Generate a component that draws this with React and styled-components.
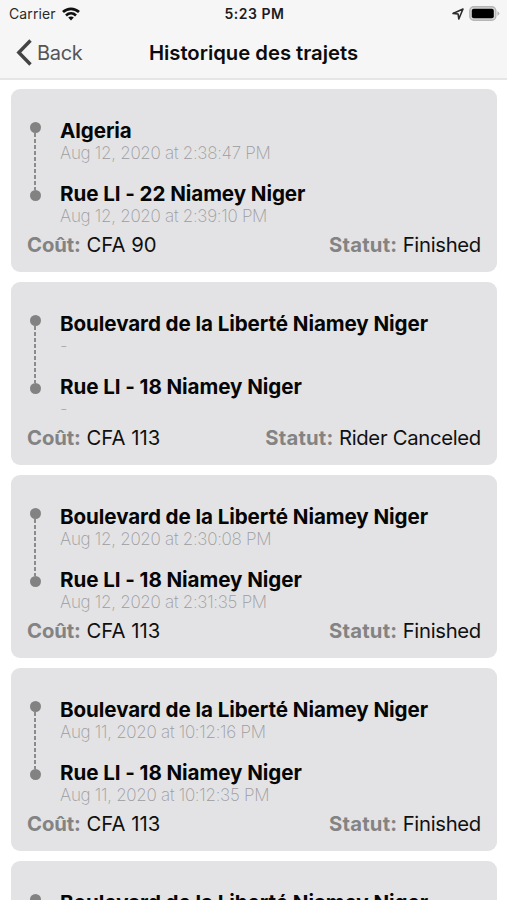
import React from "react";
import styled, { createGlobalStyle } from "styled-components";

const GlobalStyle = createGlobalStyle`
  * {
    box-sizing: border-box;
  }
  body {
    margin: 0;
    background: #ffffff;
    font-family: Inter, "Liberation Sans", sans-serif;
    -webkit-font-smoothing: antialiased;
  }
`;

const Screen = styled.div`
  height: 900px;
  overflow: hidden;
  display: flex;
  flex-direction: column;
`;
const TopBar = styled.header`
  flex: none;
  height: 80px;
  background: #f7f6f7;
  border-bottom: 2px solid #e6e6e7;
`;
const StatusBar = styled.div`
  display: grid;
  grid-template-columns: 1fr auto 1fr;
  align-items: center;
  height: 27px;
  padding: 0 7px 0 9px;
`;
const Carrier = styled.div`
  display: flex;
  align-items: center;
  gap: 6px;
  font-size: 14px;
  letter-spacing: 0.1px;
  color: #2a2a2a;
`;
const Clock = styled.div`
  font-size: 14px;
  font-weight: 600;
  letter-spacing: 0.5px;
  color: #1c1c1c;
`;
const Indicators = styled.div`
  display: flex;
  justify-content: flex-end;
  align-items: center;
  gap: 5px;
`;
const NavBar = styled.div`
  display: grid;
  grid-template-columns: 1fr auto 1fr;
  align-items: center;
  height: 51px;
  padding: 0 16px;
`;
const BackButton = styled.button`
  display: flex;
  align-items: center;
  gap: 5px;
  border: none;
  padding: 0;
  background: none;
  color: #555556;
  font-family: inherit;
  font-size: 20px;
  letter-spacing: -0.3px;
`;
const Title = styled.h1`
  margin: 0;
  font-size: 20.3px;
  font-weight: 600;
  letter-spacing: -0.02px;
  color: #0c0c0c;
`;
const TripList = styled.main`
  display: flex;
  flex-direction: column;
  gap: 10px;
  padding: 9px 10px 0 11px;
`;
const Card = styled.section`
  flex: none;
  height: 183px;
  padding: 30px 16px 0;
  border-radius: 9px;
  background: #e3e3e5;
`;
const Route = styled.div`
  display: flex;
  gap: 17px;
  height: 114px;
`;
const Track = styled.div`
  display: flex;
  flex-direction: column;
  align-items: center;
  width: 16px;
  height: 82px;
  padding-top: 3px;
`;
const Dot = styled.div`
  flex: none;
  width: 11px;
  height: 11px;
  border-radius: 50%;
  background: #828283;
`;
const Dashes = styled.div`
  width: 2px;
  height: 57px;
  background: repeating-linear-gradient(#8b8b8c 0 4px, transparent 4px 6px);
`;
const Stops = styled.div`
  display: flex;
  flex-direction: column;
  gap: 19px;
`;
const Place = styled.div`
  line-height: 24px;
  font-size: 20.6px;
  font-weight: 700;
  letter-spacing: -0.08px;
  white-space: nowrap;
  color: #060606;
`;
const Time = styled.div`
  line-height: 20px;
  font-size: 17px;
  font-weight: 200;
  letter-spacing: -0.28px;
  color: #9c9c9e;
`;
const Summary = styled.div`
  display: flex;
  justify-content: space-between;
  line-height: 24px;
  font-size: 20.3px;
  letter-spacing: -0.3px;
  color: #101010;
`;
const Label = styled.span`
  font-weight: 700;
  letter-spacing: ${(props) => props.$spacing};
  color: #838384;
`;
const Cost = styled.span`
  letter-spacing: 0;
`;

const boulevard = "Boulevard de la Liberté Niamey Niger";

const trips = [
  { from: "Algeria", start: "Aug 12, 2020 at 2:38:47 PM", to: "Rue LI - 22 Niamey Niger", end: "Aug 12, 2020 at 2:39:10 PM", cost: "CFA 90", status: "Finished" },
  { from: boulevard, start: "-", to: "Rue LI - 18 Niamey Niger", end: "-", cost: "CFA 113", status: "Rider Canceled" },
  { from: boulevard, start: "Aug 12, 2020 at 2:30:08 PM", to: "Rue LI - 18 Niamey Niger", end: "Aug 12, 2020 at 2:31:35 PM", cost: "CFA 113", status: "Finished" },
  { from: boulevard, start: "Aug 11, 2020 at 10:12:16 PM", to: "Rue LI - 18 Niamey Niger", end: "Aug 11, 2020 at 10:12:35 PM", cost: "CFA 113", status: "Finished" },
  { from: boulevard },
];

function WifiIcon() {
  return (
    <svg width="18" height="14" viewBox="0 0 18 14" fill="none" stroke="#111" strokeWidth="2.7">
      <path d="M1 5.1C5.6.7 12.4.7 17 5.1" />
      <path d="M4 8.4c2.9-2.7 7.1-2.7 10 0" />
      <path d="M6.2 10.6c1.6-1.4 4-1.4 5.6 0L9 13.5z" fill="#111" stroke="none" />
    </svg>
  );
}

function LocationIcon() {
  return (
    <svg width="12" height="12" viewBox="0 0 12 12" fill="none" stroke="#2c2c2c" strokeWidth="1.6" strokeLinejoin="round">
      <path d="M1 5.4 11 1 6.8 11 6.1 6z" />
    </svg>
  );
}

function BatteryIcon() {
  return (
    <svg width="31" height="15" viewBox="0 0 31 15">
      <rect x="0.8" y="0.8" width="26" height="13.4" rx="4" fill="#d6d6d6" stroke="#b5b5b5" strokeWidth="1.4" />
      <rect x="2.8" y="2.8" width="22" height="9.4" rx="2" fill="#000" />
      <path d="M28.4 5.2q2 .8 2 2.3t-2 2.3z" fill="#b5b5b5" />
    </svg>
  );
}

function Trip({ trip }) {
  return (
    <Card>
      <Route>
        <Track>
          <Dot />
          <Dashes />
          <Dot />
        </Track>
        <Stops>
          <div>
            <Place>{trip.from}</Place>
            <Time>{trip.start}</Time>
          </div>
          <div>
            <Place>{trip.to}</Place>
            <Time>{trip.end}</Time>
          </div>
        </Stops>
      </Route>
      {trip.cost && (
        <Summary>
          <Cost><Label $spacing="-0.1px">Coût:</Label> {trip.cost}</Cost>
          <span><Label $spacing="0.2px">Statut:</Label> {trip.status}</span>
        </Summary>
      )}
    </Card>
  );
}

function App() {
  return (
    <Screen>
      <GlobalStyle />
      <TopBar>
        <StatusBar>
          <Carrier>Carrier <WifiIcon /></Carrier>
          <Clock>5:23 PM</Clock>
          <Indicators>
            <LocationIcon />
            <BatteryIcon />
          </Indicators>
        </StatusBar>
        <NavBar>
          <BackButton>
            <svg width="16" height="27" viewBox="0 0 16 27" fill="none" stroke="#444445" strokeWidth="3.4">
              <path d="M14.5 1.5 2.8 13.5l11.7 12" />
            </svg>
            Back
          </BackButton>
          <Title>Historique des trajets</Title>
        </NavBar>
      </TopBar>
      <TripList>
        {trips.map((trip, i) => (
          <Trip key={i} trip={trip} />
        ))}
      </TripList>
    </Screen>
  );
}

export default App;
